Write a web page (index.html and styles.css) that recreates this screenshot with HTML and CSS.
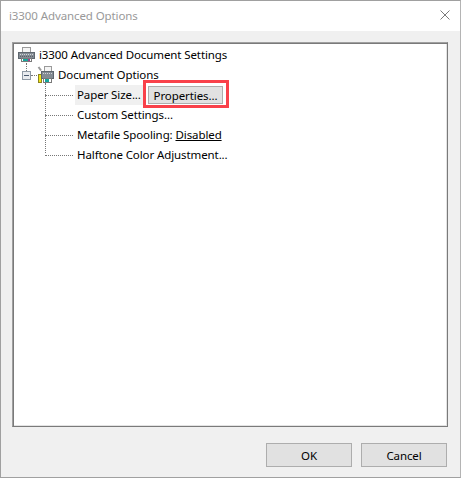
FILE: index.html
```html
<!DOCTYPE html>
<html lang="en">
<head>
  <meta charset="UTF-8">
  <meta name="viewport" content="width=device-width, initial-scale=1.0">
  <title>i3300 Advanced Options</title>
  <link rel="stylesheet" href="styles.css">
</head>
<body>

  <div class="dialog">
    <div class="titlebar">
      <span class="title">i3300 Advanced Options</span>
      <svg class="close" width="10" height="10" viewBox="0 0 10 10">
        <path d="M0.5 0.5L9.5 9.5M9.5 0.5L0.5 9.5" stroke="#7a7a7a" stroke-width="1" fill="none"/>
      </svg>
    </div>

    <div class="content">
      <div class="tree-panel">
        <div class="tree">
          <!-- connector lines -->
          <span class="line-v line-root"></span>
          <span class="line-v line-options"></span>

          <div class="row row-root">
            <svg class="icon" width="17" height="16" viewBox="0 0 17 16">
              <rect x="4.5" y="0.5" width="8" height="5" fill="#f4f4f4" stroke="#9a9a9a"/>
              <rect x="0.5" y="5.5" width="16" height="6" fill="#838b93" stroke="#5f676f"/>
              <path d="M2 7.5h13" stroke="#d2d5d8" stroke-dasharray="1 1"/>
              <path d="M2 9.5h13" stroke="#5b5f66" stroke-dasharray="1 1"/>
              <rect x="3.5" y="11.5" width="10" height="3" fill="#fff" stroke="#7a7a7a"/>
              <rect x="5" y="12" width="5" height="2" fill="#16a79c"/>
              <rect x="10" y="12" width="2" height="2" fill="#a63c8e"/>
            </svg>
            <span class="label">i3300 Advanced Document Settings</span>
          </div>

          <div class="row row-options">
            <span class="expander"></span>
            <span class="line-stub"></span>
            <svg class="icon" width="17" height="18" viewBox="0 0 17 18">
              <path d="M1.5 1L4 4.5" stroke="#9a9a9a" stroke-width="2" fill="none"/>
              <rect x="1.5" y="8.5" width="3" height="8" fill="#f0e418" stroke="#8d8420"/>
              <rect x="7.5" y="0.5" width="7" height="5" fill="#f4f4f4" stroke="#9a9a9a"/>
              <rect x="4.5" y="5.5" width="12" height="7" fill="#838b93" stroke="#5f676f"/>
              <path d="M6 7.5h9" stroke="#d2d5d8" stroke-dasharray="1 1"/>
              <rect x="6.5" y="12.5" width="8" height="4" fill="#fff" stroke="#7a7a7a"/>
              <rect x="8" y="13" width="4" height="3" fill="#16a79c"/>
            </svg>
            <span class="label">Document Options</span>
          </div>

          <div class="row row-leaf">
            <span class="line-h"></span>
            <span class="label selected">Paper Size...</span>
            <span class="callout">
              <button class="btn-props" type="button">Properties...</button>
            </span>
          </div>
          <div class="row row-leaf">
            <span class="line-h"></span>
            <span class="label">Custom Settings...</span>
          </div>
          <div class="row row-leaf">
            <span class="line-h"></span>
            <span class="label">Metafile Spooling: <u>Disabled</u></span>
          </div>
          <div class="row row-leaf">
            <span class="line-h"></span>
            <span class="label">Halftone Color Adjustment...</span>
          </div>
        </div>
      </div>

      <div class="actions">
        <button class="btn" type="button">OK</button>
        <button class="btn" type="button">Cancel</button>
      </div>
    </div>
  </div>

</body>
</html>
```

FILE: styles.css
```css
html, body {
  margin: 0;
  height: 100%;
}
body {
  font-family: "Noto Sans", "Open Sans", Arial, sans-serif;
  font-size: 11.5px;
  letter-spacing: -0.1px;
  color: #000;
  background-color: #f0f0f0;
}
.dialog {
  box-sizing: border-box;
  height: 478px;
  display: flex;
  flex-direction: column;
  border: 1px solid #a0a0a0;
  border-right-color: #b4b4b4;
}
.titlebar {
  height: 30px;
  flex: none;
  display: flex;
  align-items: center;
  justify-content: space-between;
  padding: 0 10px 0 8px;
  background-color: #fff;
}
.title {
  color: #999;
  margin-bottom: 2px;
}
.close {
  margin-bottom: 2px;
}
.content {
  flex: 1;
  display: flex;
  flex-direction: column;
  padding: 11px 12px 11px 11px;
}
.tree-panel {
  box-sizing: border-box;
  height: 385px;
  background-color: #fff;
  border: 1px solid #a0a0a0;
  border-right-color: #7a7a7a;
  border-bottom-color: #7a7a7a;
  box-shadow: inset 1px 1px 0 #7a7a7a, inset -1px -1px 0 #e3e3e3;
}
.tree {
  position: relative;
  padding-top: 2px;
}
.row {
  display: flex;
  align-items: center;
  height: 20px;
}
.row-root {
  padding-left: 5px;
}
.row-root .icon {
  margin-right: 4px;
}
.row-options {
  padding-left: 9px;
}
.row-options .icon {
  margin-right: 4px;
}
.row-leaf {
  padding-left: 32px;
}
.label {
  white-space: nowrap;
  line-height: 20px;
}
.selected {
  box-sizing: border-box;
  width: 68px;
  background-color: #f0f0f0;
  padding-left: 2px;
  margin-left: -2px;
}
.expander {
  box-sizing: border-box;
  position: relative;
  width: 9px;
  height: 9px;
  flex: none;
  border: 1px solid #8f9aa6;
  background-color: #e8ebef;
}
.expander::after {
  content: "";
  position: absolute;
  left: 1px;
  right: 1px;
  top: 3px;
  height: 1px;
  background-color: #4a5a70;
}
.line-stub {
  width: 6px;
  flex: none;
  border-top: 1px dotted #777;
}
.line-h {
  width: 28px;
  margin-right: 4px;
  border-top: 1px dotted #777;
}
.line-v {
  position: absolute;
  width: 0;
  border-left: 1px dotted #777;
}
.line-root {
  left: 13px;
  top: 20px;
  height: 8px;
}
.line-options {
  left: 32px;
  top: 40px;
  height: 70px;
}
/* red annotation box drawn over the button */
.callout {
  position: relative;
  display: flex;
  margin-left: 5px;
}
.callout::after {
  content: "";
  position: absolute;
  left: -5px;
  right: -6px;
  top: -6px;
  bottom: -4px;
  border: 3px solid #f9414a;
  pointer-events: none;
}
.btn-props {
  box-sizing: border-box;
  width: 75px;
  height: 18px;
  padding: 0;
  font: inherit;
  letter-spacing: inherit;
  color: #000;
  background-color: #e1e1e1;
  border: 1px solid #adadad;
}
.actions {
  display: flex;
  justify-content: flex-end;
  gap: 9px;
  margin: 16px 1px 0 0;
}
.btn {
  box-sizing: border-box;
  width: 86px;
  height: 24px;
  padding: 0;
  font: inherit;
  letter-spacing: inherit;
  color: #000;
  background-color: #e1e1e1;
  border: 1px solid #adadad;
}
```
